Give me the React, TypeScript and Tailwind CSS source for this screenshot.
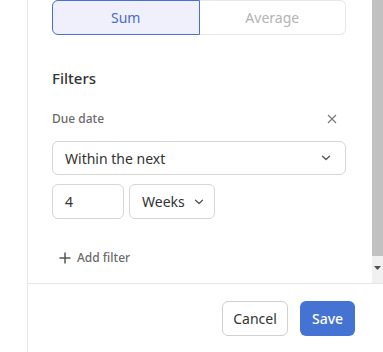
import React from "react";

const font = { fontFamily: '"Noto Sans", "Segoe UI", sans-serif' };

function Chevron({ className = "" }: { className?: string }) {
  return (
    <svg className={className} width="10" height="6" viewBox="0 0 10 6" fill="none">
      <path d="M1.5 1.2 L5 4.5 L8.5 1.2" stroke="#555" strokeWidth="1.3" strokeLinecap="round" strokeLinejoin="round" />
    </svg>
  );
}

export default function App() {
  return (
    <div className="flex h-[352px] w-[383px] bg-white overflow-hidden" style={font}>
      <div className="w-[28px] shrink-0 border-r border-[#e6e6e6]" />
      <div className="flex flex-1 flex-col">
        <div className="flex h-[284px] border-b border-[#e6e6e6]">
          <div className="flex flex-1 flex-col pl-[24px] pr-[26px]">
            <div className="flex h-[35px] text-[14px]">
              <div className="flex flex-1 items-center justify-center rounded-l-[6px] border border-[#4a6fcf] bg-[#eff0fb] text-[#4b6cc6]">
                Sum
              </div>
              <div className="flex flex-1 items-center justify-center rounded-r-[6px] border border-l-0 border-[#e8e8e8] text-[#b3b3b3]">
                Average
              </div>
            </div>
            <div className="mt-[33px] text-[15px] font-medium leading-[20px] text-[#333]">Filters</div>
            <div className="mt-[23px] flex items-center justify-between">
              <span className="text-[12px] font-medium leading-[16px] text-[#6b6b6b]">Due date</span>
              <svg width="10" height="10" viewBox="0 0 10 10" className="mr-[9px]">
                <path d="M1 1 L9 9 M9 1 L1 9" stroke="#777" strokeWidth="1.1" />
              </svg>
            </div>
            <div className="mt-[14px] flex h-[34px] items-center justify-between rounded-[6px] border border-[#d6d6d6] pl-[12px] pr-[14px] text-[14px] text-[#333]">
              <span>Within the next</span>
              <Chevron />
            </div>
            <div className="mt-[9px] flex gap-[5px]">
              <div className="flex h-[35px] w-[72px] items-center rounded-[6px] border border-[#d6d6d6] pl-[12px] text-[14px] text-[#333]">
                4
              </div>
              <div className="flex h-[35px] w-[86px] items-center gap-[9px] rounded-[6px] border border-[#d6d6d6] pl-[12px] text-[14px] text-[#333]">
                <span>Weeks</span>
                <Chevron />
              </div>
            </div>
            <div className="mt-[31px] flex items-center gap-[6px] pl-[7px]">
              <svg width="12" height="12" viewBox="0 0 12 12">
                <path d="M6 0.5 V11.5 M0.5 6 H11.5" stroke="#555" strokeWidth="1.5" />
              </svg>
              <span className="text-[12px] font-medium leading-[16px] text-[#6b6b6b]">Add filter</span>
            </div>
          </div>
          <div className="flex w-[11px] flex-col bg-[#f1f1f1]">
            <div className="h-[256px] bg-[#c1c1c1]" />
            <div className="flex flex-1 items-center justify-center pb-[4px]">
              <svg width="7" height="4" viewBox="0 0 7 4">
                <path d="M0 0 H7 L3.5 4 Z" fill="#505050" />
              </svg>
            </div>
          </div>
        </div>
        <div className="flex justify-end gap-[12px] pr-[28px] pt-[17px]">
          <button className="h-[35px] w-[66px] rounded-[6px] border border-[#d0d0d0] bg-white text-[14px] text-[#333]">
            Cancel
          </button>
          <button className="h-[35px] w-[55px] rounded-[6px] bg-[#4573d3] text-[14px] font-medium text-white">
            Save
          </button>
        </div>
      </div>
    </div>
  );
}
